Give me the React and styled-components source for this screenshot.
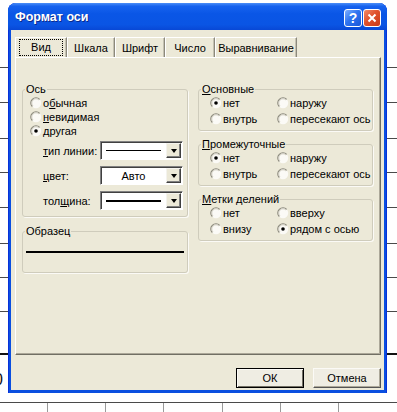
import React from "react";
import styled, { createGlobalStyle } from "styled-components";

const GlobalStyle = createGlobalStyle`
  html, body {
    margin: 0;
    padding: 0;
    background: #fff;
  }
  body {
    font-family: "Liberation Sans", Arial, sans-serif;
  }
`;

const Page = styled.div`
  position: relative;
  width: 397px;
  height: 412px;
  overflow: hidden;
  background: #fff;
`;

// spreadsheet behind the dialog
const Sheet = styled.div`
  display: flex;
  flex-direction: column;
`;
const SheetRow = styled.div`
  box-sizing: border-box;
  height: ${(p) => p.$h}px;
  border-bottom: ${(p) => (p.$thick ? "2px solid #111" : "1px solid #4a4a4a")};
  font: 16px "Liberation Sans", Arial, sans-serif;
  color: #111;
`;
const CellValue = styled.span`
  display: block;
  margin: 16px 0 0 -6px;
  line-height: 18px;
`;
const CellRow = styled.div`
  display: grid;
  grid-template-columns: 47px 58px 58px 59px 58px 58px 1fr;
  height: 10px;
`;
const Cell = styled.div`
  border-left: 1px solid #9a9a9a;
  &:first-child {
    border-left: none;
  }
`;

// dialog window
const Window = styled.div`
  position: absolute;
  left: 8px;
  top: 3px;
  width: 379px;
  height: 390px;
  box-sizing: border-box;
  display: flex;
  flex-direction: column;
  background: #0a4fe0;
  border-radius: 8px 8px 0 0;
  box-shadow: inset 1px 0 0 #0831d9, inset -1px 0 0 #0831d9;
`;
const TitleBar = styled.div`
  height: 27px;
  display: flex;
  align-items: center;
  padding: 0 6px 0 7px;
  border-radius: 8px 8px 0 0;
  background: linear-gradient(
    #4b8ef7 0%,
    #1662ee 12%,
    #0a56e6 40%,
    #0a55e4 80%,
    #0848d6 100%
  );
`;
const Title = styled.span`
  flex: 1;
  color: #fff;
  font: bold 12.5px "Liberation Sans", Arial, sans-serif;
  text-shadow: 1px 1px 0 #0b2a8c;
  padding-top: 1px;
`;
const Controls = styled.div`
  display: flex;
  gap: 1px;
  margin-top: 2px;
`;
const CtrlButton = styled.div`
  width: 18px;
  height: 18px;
  box-sizing: border-box;
  border: 1px solid #fff;
  border-radius: 3px;
  display: flex;
  align-items: center;
  justify-content: center;
  color: #fff;
  font: bold 14px "Liberation Sans", Arial, sans-serif;
  background: ${(p) =>
    p.$close
      ? "linear-gradient(135deg, #f08a6a 0%, #e0512c 45%, #c83a18 100%)"
      : "linear-gradient(135deg, #7fb0ff 0%, #2f74f0 45%, #1a55d8 100%)"};
`;

const Body = styled.div`
  flex: 1;
  margin: 0 3px 3px;
  background: #ece9d8;
  display: flex;
  flex-direction: column;
  padding: 7px 3px 2px 4px;
  font-size: 11px;
  color: #000;
`;

const TabRow = styled.div`
  display: flex;
  height: 20px;
`;
const Tab = styled.div`
  width: ${(p) => p.$w}px;
  box-sizing: border-box;
  display: flex;
  align-items: center;
  justify-content: center;
  border-top: 1px solid #fff;
  border-left: 1px solid #fff;
  border-right: 1px solid #8c897c;
  box-shadow: inset -1px 0 0 #c4c1b2;
  white-space: nowrap;
`;
const FocusLabel = styled.span`
  padding: 1px 11px 2px;
  border: 1px dotted #000;
`;

const Panel = styled.div`
  height: 298px;
  box-sizing: border-box;
  border-top: 1px solid #fff;
  border-left: 1px solid #fff;
  border-right: 1px solid #716f64;
  border-bottom: 1px solid #716f64;
  box-shadow: inset -1px -1px 0 #aca899;
  padding: 25px 0 0 6px;
  display: flex;
  gap: 10px;
  align-items: flex-start;
`;
const Column = styled.div`
  width: ${(p) => p.$w}px;
  display: flex;
  flex-direction: column;
  gap: ${(p) => p.$gap}px;
`;

const Group = styled.fieldset`
  margin: 0;
  padding: 1px 0 ${(p) => p.$pb}px;
  min-width: 0;
  border: 1px solid #cfccbc;
  border-radius: 3px;
  box-shadow: 1px 1px 0 #fbfaf6;
`;
const Legend = styled.legend`
  padding: 0 1px;
  margin-left: 2px;
  line-height: 12px;
  font-size: 11px;
`;

const RadioRow = styled.label`
  display: flex;
  align-items: center;
  gap: 1px;
  height: ${(p) => p.$h}px;
  padding-left: ${(p) => p.$pl}px;
  white-space: nowrap;
`;
const RadioGrid = styled.div`
  display: grid;
  grid-template-columns: 67px 1fr;
  grid-auto-rows: 16px;
  margin-top: -1px;
  padding-left: 11px;
`;
const RadioMark = styled.svg`
  flex: none;
  display: block;
`;

const FieldRow = styled.div`
  display: flex;
  align-items: center;
  height: 25px;
  padding-left: 20px;
`;
const FieldLabel = styled.span`
  width: 57px;
  white-space: nowrap;
`;
const Combo = styled.div`
  width: 83px;
  height: 19px;
  box-sizing: border-box;
  display: flex;
  padding: 1px;
  background: #fff;
  border: 1px solid;
  border-color: #808080 #fff #fff #808080;
  box-shadow: inset 1px 1px 0 #404040;
`;
const ComboValue = styled.div`
  flex: 1;
  display: flex;
  align-items: center;
  justify-content: center;
  padding: 0 5px 0 4px;
`;
const LineSample = styled.div`
  width: 100%;
  height: ${(p) => p.$t}px;
  background: #000;
`;
const ComboArrow = styled.div`
  width: 15px;
  box-sizing: border-box;
  display: flex;
  align-items: center;
  justify-content: center;
  background: #ece9d8;
  border: 1px solid;
  border-color: #f4f3ee #404040 #404040 #f4f3ee;
  box-shadow: inset -1px -1px 0 #808080;
  &::after {
    content: "";
    border-left: 3.5px solid transparent;
    border-right: 3.5px solid transparent;
    border-top: 4px solid #000;
    margin-top: 1px;
  }
`;

const SampleArea = styled.div`
  padding: 13px 3px 19px;
`;

const Footer = styled.div`
  display: flex;
  justify-content: flex-end;
  gap: 9px;
  padding-top: 13px;
`;
const Button = styled.div`
  width: 68px;
  height: 20px;
  box-sizing: border-box;
  display: flex;
  align-items: center;
  justify-content: center;
  background: #efede3;
  border: 1px solid;
  border-color: ${(p) =>
    p.$default ? "#000" : "#fbfaf6 #555 #555 #fbfaf6"};
  box-shadow: ${(p) =>
    p.$default
      ? "inset 1px 1px 0 #fbfaf6, inset -1px -1px 0 #716f64"
      : "inset -1px -1px 0 #aca899"};
`;

const Radio = ({ checked }) => (
  <RadioMark width="12" height="12" viewBox="0 0 12 12">
    <circle cx="6" cy="6" r="5.2" fill="#fbfaf6" />
    <path d="M2.3 9.7 A5.2 5.2 0 0 1 9.7 2.3" fill="none" stroke="#8a887c" strokeWidth="1.1" />
    <path d="M3 9 A4.2 4.2 0 0 1 9 3" fill="none" stroke="#c9c6b8" strokeWidth="0.9" />
    {checked && <circle cx="6" cy="6" r="1.8" fill="#000" />}
  </RadioMark>
);

const Option = ({ checked, children, h, pl }) => (
  <RadioRow $h={h} $pl={pl}>
    <Radio checked={checked} />
    <span>{children}</span>
  </RadioRow>
);

const lines = [67, 102, 138, 172, 207, 243, 277, 311];
const sheetRows = lines.map((l, i) => l + 1 - (i ? lines[i - 1] + 1 : 0));

const tabs = [
  ["Вид", 52],
  ["Шкала", 48],
  ["Шрифт", 50],
  ["Число", 50],
  ["Выравнивание", 82],
];

const tickGroups = [
  {
    title: (
      <>
        <u>О</u>сновные
      </>
    ),
    options: ["нет", "наружу", "внутрь", "пересекают ось"],
    checked: 0,
  },
  {
    title: (
      <>
        <u>П</u>ромежуточные
      </>
    ),
    options: ["нет", "наружу", "внутрь", "пересекают ось"],
    checked: 0,
  },
  {
    title: (
      <>
        <u>М</u>етки делений
      </>
    ),
    options: ["нет", "вверху", "внизу", "рядом с осью"],
    checked: 3,
  },
];

export default function App() {
  return (
    <Page>
      <GlobalStyle />
      <Sheet>
        {sheetRows.map((h, i) => (
          <SheetRow key={i} $h={h} />
        ))}
        <SheetRow $h={43} $thick />
        <SheetRow $h={48}>
          <CellValue>0</CellValue>
        </SheetRow>
        <CellRow>
          {Array.from({ length: 7 }).map((_, i) => (
            <Cell key={i} />
          ))}
        </CellRow>
      </Sheet>

      <Window>
        <TitleBar>
          <Title>Формат оси</Title>
          <Controls>
            <CtrlButton>?</CtrlButton>
            <CtrlButton $close>
              <svg width="10" height="10" viewBox="0 0 10 10">
                <path d="M1.5 1.5 L8.5 8.5 M8.5 1.5 L1.5 8.5" stroke="#fff" strokeWidth="2" />
              </svg>
            </CtrlButton>
          </Controls>
        </TitleBar>

        <Body>
          <TabRow>
            {tabs.map(([name, w], i) => (
              <Tab key={name} $w={w}>
                {i === 0 ? <FocusLabel>{name}</FocusLabel> : name}
              </Tab>
            ))}
          </TabRow>

          <Panel>
            <Column $w={166} $gap={8}>
              <Group $pb={3}>
                <Legend>Ось</Legend>
                <Option h={14} pl={7}>
                  о<u>б</u>ычная
                </Option>
                <Option h={14} pl={7}>
                  <u>н</u>евидимая
                </Option>
                <Option h={14} pl={7} checked>
                  другая
                </Option>
                <FieldRow>
                  <FieldLabel>
                    <u>т</u>ип линии:
                  </FieldLabel>
                  <Combo>
                    <ComboValue>
                      <LineSample $t={1} />
                    </ComboValue>
                    <ComboArrow />
                  </Combo>
                </FieldRow>
                <FieldRow>
                  <FieldLabel>
                    <u>ц</u>вет:
                  </FieldLabel>
                  <Combo>
                    <ComboValue>Авто</ComboValue>
                    <ComboArrow />
                  </Combo>
                </FieldRow>
                <FieldRow>
                  <FieldLabel>
                    тол<u>щ</u>ина:
                  </FieldLabel>
                  <Combo>
                    <ComboValue>
                      <LineSample $t={2} />
                    </ComboValue>
                    <ComboArrow />
                  </Combo>
                </FieldRow>
              </Group>

              <Group $pb={0}>
                <Legend>Образец</Legend>
                <SampleArea>
                  <LineSample $t={2} />
                </SampleArea>
              </Group>
            </Column>

            <Column $w={175} $gap={7}>
              {tickGroups.map((g, gi) => (
                <Group key={gi} $pb={3}>
                  <Legend>{g.title}</Legend>
                  <RadioGrid>
                    {g.options.map((o, oi) => (
                      <Option key={o} h={16} pl={0} checked={oi === g.checked}>
                        {o}
                      </Option>
                    ))}
                  </RadioGrid>
                </Group>
              ))}
            </Column>
          </Panel>

          <Footer>
            <Button $default>ОК</Button>
            <Button>Отмена</Button>
          </Footer>
        </Body>
      </Window>
    </Page>
  );
}
